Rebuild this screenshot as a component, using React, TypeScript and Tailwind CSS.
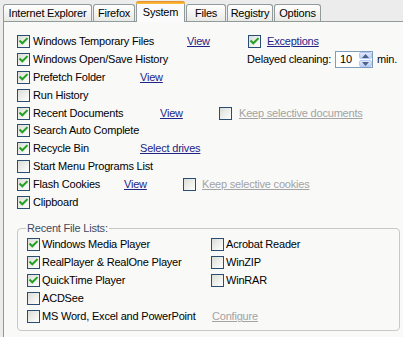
import React from "react";

function Check({ checked }: { checked?: boolean }) {
  return (
    <div className="w-[13px] h-[13px] shrink-0 border border-[#2a4d73] bg-gradient-to-br from-[#dcdcd6] to-[#ffffff] flex items-center justify-center">
      {checked && (
        <svg width="11" height="11" viewBox="0 0 11 11">
          <path d="M2.2 5.2 L4.3 7.3 L8.8 2.8" fill="none" stroke="#21a121" strokeWidth="2" strokeLinecap="square" />
        </svg>
      )}
    </div>
  );
}

function Link({ children, disabled }: { children: React.ReactNode; disabled?: boolean }) {
  return (
    <span className={disabled ? "text-[#a3a3a3] underline whitespace-nowrap" : "text-[#1f2486] underline whitespace-nowrap"}>
      {children}
    </span>
  );
}

function Item({ checked, label, w, gap = 3 }: { checked?: boolean; label: string; w?: string; gap?: number }) {
  return (
    <div className={`flex items-center shrink-0 ${w ?? ""}`}>
      <Check checked={checked} />
      <span className={gap === 2 ? "ml-[2px] whitespace-nowrap" : "ml-[3px] whitespace-nowrap"}>{label}</span>
    </div>
  );
}

function Tab({ label, w, ml }: { label: string; w: string; ml: string }) {
  return (
    <div
      className={`${w} ${ml} h-[17px] border-t border-l border-r border-[#919b9c] rounded-t-[3px] bg-gradient-to-b from-[#ffffff] to-[#e9e9e4] flex items-center justify-center whitespace-nowrap`}
    >
      {label}
    </div>
  );
}

export default function App() {
  return (
    <div className="w-[403px] h-[337px] overflow-hidden bg-[#ececec] font-['Liberation_Sans',Arial,sans-serif] text-[11px] tracking-[-0.2px] text-black leading-none">
      {/* tabs */}
      <div className="flex items-end h-[21px]">
        <Tab label="Internet Explorer" w="w-[89px]" ml="ml-[3px]" />
        <Tab label="Firefox" w="w-[42px]" ml="ml-[1px]" />
        <div className="relative top-[1px] z-10 ml-[1px] w-[49px] h-[21px] border-l border-r border-[#919b9c] rounded-t-[3px] bg-[#fbfbfb] flex flex-col">
          <div className="h-[3px] -mx-[1px] rounded-t-[3px] bg-gradient-to-b from-[#e68b2c] to-[#ffc73c]" />
          <div className="flex-1 flex items-center justify-center pb-[2px]">System</div>
        </div>
        <Tab label="Files" w="w-[40px]" ml="ml-[1px]" />
        <Tab label="Registry" w="w-[46px]" ml="ml-[1px]" />
        <Tab label="Options" w="w-[47px]" ml="ml-[1px]" />
      </div>

      {/* panel */}
      <div className="ml-[3px] w-[410px] h-[316px] border-l border-t border-[#919b9c] bg-[#f9f9f8] pl-[13px] pt-[11px]">
        <div className="flex flex-col">
          <div className="flex items-center h-[17.8px]">
            <Item checked label="Windows Temporary Files" w="w-[170px]" />
            <div className="w-[61px]"><Link>View</Link></div>
            <Check checked />
            <span className="ml-[6px]"><Link>Exceptions</Link></span>
          </div>
          <div className="flex items-center h-[17.8px]">
            <Item checked label="Windows Open/Save History" w="w-[230px]" />
            <span className="whitespace-nowrap">Delayed cleaning:</span>
            <div className="ml-[4px] w-[38px] h-[17px] border border-[#7f9db9] bg-white flex items-center">
              <span className="ml-[4px] w-[19px]">10</span>
              <div className="w-[13px] h-[15px] flex flex-col gap-[1px]">
                <div className="flex-1 rounded-[2px] border border-[#b4c8f6] bg-gradient-to-b from-[#e1eafe] to-[#bccdf5] flex items-center justify-center">
                  <svg width="7" height="4" viewBox="0 0 7 4"><path d="M0 4 L3.5 0 L7 4 Z" fill="#4d6185" /></svg>
                </div>
                <div className="flex-1 rounded-[2px] border border-[#b4c8f6] bg-gradient-to-b from-[#e1eafe] to-[#bccdf5] flex items-center justify-center">
                  <svg width="7" height="4" viewBox="0 0 7 4"><path d="M0 0 L7 0 L3.5 4 Z" fill="#4d6185" /></svg>
                </div>
              </div>
            </div>
            <span className="ml-[4px]">min.</span>
          </div>
          <div className="flex items-center h-[17.8px]">
            <Item checked label="Prefetch Folder" w="w-[123px]" />
            <Link>View</Link>
          </div>
          <div className="flex items-center h-[17.8px]">
            <Item label="Run History" />
          </div>
          <div className="flex items-center h-[17.8px]">
            <Item checked label="Recent Documents" w="w-[143px]" />
            <div className="w-[59px]"><Link>View</Link></div>
            <Check />
            <span className="ml-[7px]"><Link disabled>Keep selective documents</Link></span>
          </div>
          <div className="flex items-center h-[17.8px]">
            <Item checked label="Search Auto Complete" />
          </div>
          <div className="flex items-center h-[17.8px]">
            <Item checked label="Recycle Bin" w="w-[123px]" />
            <Link>Select drives</Link>
          </div>
          <div className="flex items-center h-[17.8px]">
            <Item label="Start Menu Programs List" />
          </div>
          <div className="flex items-center h-[17.8px]">
            <Item checked label="Flash Cookies" w="w-[107px]" />
            <div className="w-[59px]"><Link>View</Link></div>
            <Check />
            <span className="ml-[6px]"><Link disabled>Keep selective cookies</Link></span>
          </div>
          <div className="flex items-center h-[17.8px]">
            <Item checked label="Clipboard" />
          </div>
        </div>

        {/* group box */}
        <div className="relative mt-[17px] w-[383px] h-[103px] border border-[#c9c9c4] rounded-[4px] pl-[9px] pt-[7px]">
          <span className="absolute -top-[6px] left-[8px] px-[1px] bg-[#f9f9f8] text-[#3e4a63] whitespace-nowrap">Recent File Lists:</span>
          <div className="grid grid-cols-[184px_1fr] auto-rows-[18px] items-center">
            <Item checked label="Windows Media Player" gap={2} />
            <Item label="Acrobat Reader" gap={2} />
            <Item checked label="RealPlayer & RealOne Player" gap={2} />
            <Item label="WinZIP" gap={2} />
            <Item checked label="QuickTime Player" gap={2} />
            <Item label="WinRAR" gap={2} />
            <Item label="ACDSee" gap={2} />
            <div />
            <Item label="MS Word, Excel and PowerPoint" gap={2} />
            <span className="ml-[1px]"><Link disabled>Configure</Link></span>
          </div>
        </div>
      </div>
    </div>
  );
}
